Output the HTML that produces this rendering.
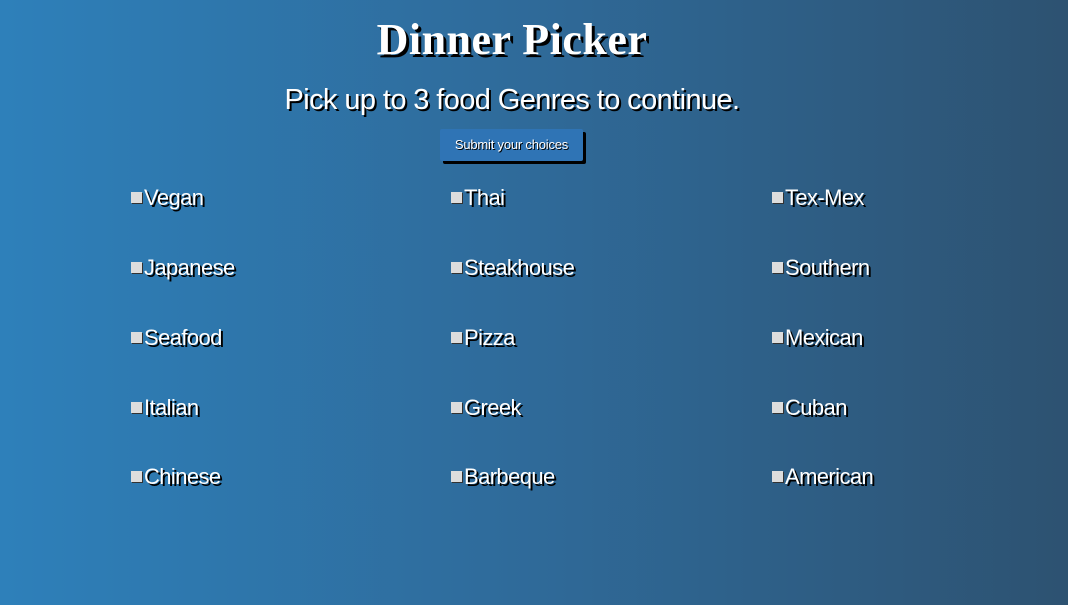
<!DOCTYPE html>
<html><head><style>
html,body{margin:0;padding:0}
body{width:1068px;height:605px;overflow:hidden;background:linear-gradient(to right,#2e80ba,#2f6a99 50%,#2d5271);font-family:"Liberation Sans",sans-serif;color:#fff;position:relative}
h1{position:absolute;top:14px;left:0;width:1024px;text-align:center;margin:0;font-family:"Liberation Serif",serif;font-weight:bold;font-size:44px;text-shadow:3px 3px 0 #000;letter-spacing:0.5px}
.sub{position:absolute;top:84px;left:0;width:1024px;text-align:center;font-size:29px;text-shadow:2px 2px 0 #000;letter-spacing:-0.6px}
.btn{position:absolute;left:440px;top:129px;width:143px;height:32px;background:#2f74b5;box-shadow:3px 3px 0 #000;border-radius:2px;font-size:13px;line-height:32px;text-align:center;text-shadow:1px 1px 0 #000;letter-spacing:-0.2px}
.it{position:absolute;font-size:22px;text-shadow:2px 2px 0 #000;line-height:24px;letter-spacing:-0.6px}
.it i{display:inline-block;width:11px;height:11px;background:#ddd;margin-right:2px;vertical-align:2px;box-shadow:1px 1px 0 #333}
</style></head><body>
<h1>Dinner Picker</h1>
<div class="sub">Pick up to 3 food Genres to continue.</div>
<div class="btn">Submit your choices</div>
<div class="it" style="left:131px;top:186px"><i></i>Vegan</div>
<div class="it" style="left:451px;top:186px"><i></i>Thai</div>
<div class="it" style="left:772px;top:186px"><i></i>Tex-Mex</div>
<div class="it" style="left:131px;top:256px"><i></i>Japanese</div>
<div class="it" style="left:451px;top:256px"><i></i>Steakhouse</div>
<div class="it" style="left:772px;top:256px"><i></i>Southern</div>
<div class="it" style="left:131px;top:326px"><i></i>Seafood</div>
<div class="it" style="left:451px;top:326px"><i></i>Pizza</div>
<div class="it" style="left:772px;top:326px"><i></i>Mexican</div>
<div class="it" style="left:131px;top:396px"><i></i>Italian</div>
<div class="it" style="left:451px;top:396px"><i></i>Greek</div>
<div class="it" style="left:772px;top:396px"><i></i>Cuban</div>
<div class="it" style="left:131px;top:465px"><i></i>Chinese</div>
<div class="it" style="left:451px;top:465px"><i></i>Barbeque</div>
<div class="it" style="left:772px;top:465px"><i></i>American</div>
</body></html>
